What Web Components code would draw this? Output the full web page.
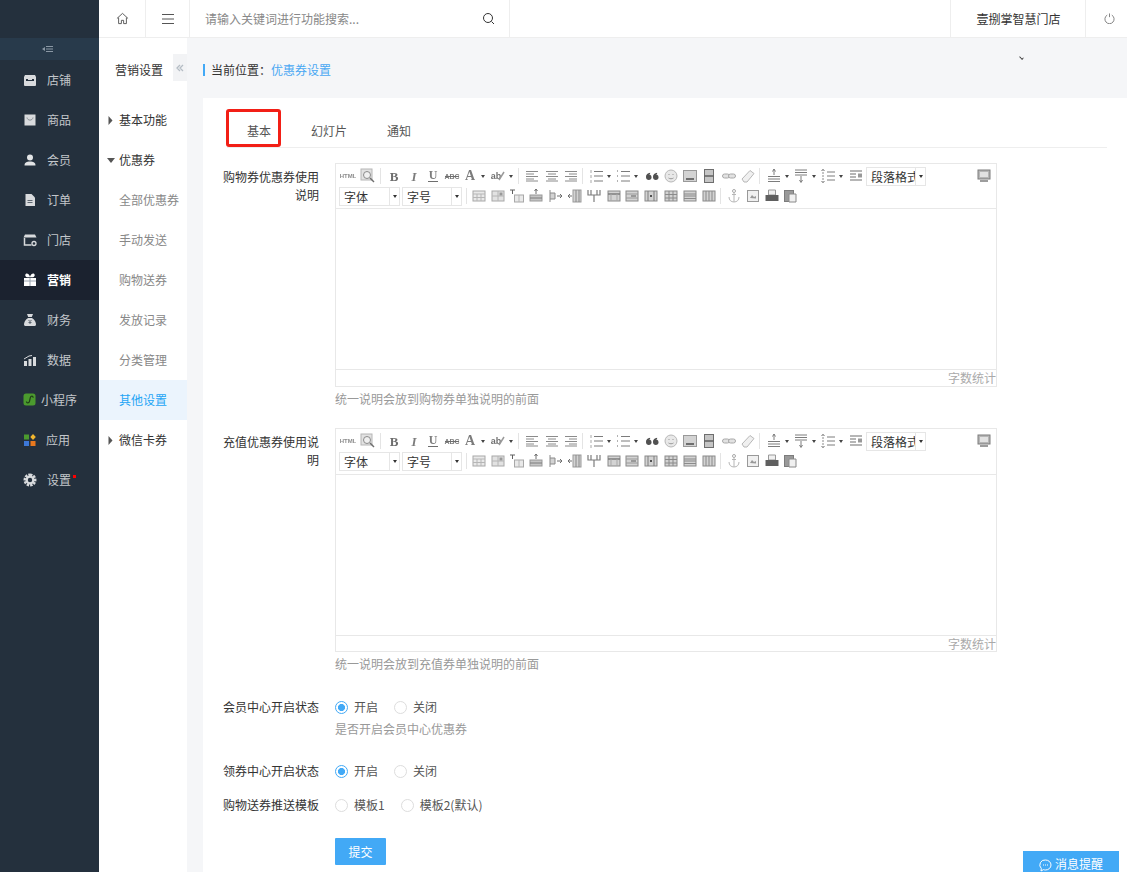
<!DOCTYPE html>
<html lang="zh">
<head>
<meta charset="utf-8">
<title>优惠券设置</title>
<style>
html, body { margin:0; height:872px; overflow:hidden; background:#f5f6f8; }
body { font:12px/18px "Noto Sans CJK SC", "Liberation Sans", sans-serif; color:#333; }
</style>
</head>
<body>
<shop-app></shop-app>
<script>
const ICONS = {
	store: '<path fill="#d8dadd" d="M2 2h10l1 2v8a1 1 0 0 1-1 1H2a1 1 0 0 1-1-1V4z"/><path fill="#24303d" d="M3 6h2v1h4V6h2v2H3z"/>',
	bag: '<path fill="#d8dadd" d="M1.500 1.500h11v11h-11z"/><path fill="none" stroke="#8a9096" d="M4 4.500c.5 3.500 5.500 3.500 6 0"/>',
	user: '<circle cx="7" cy="4.500" r="3" fill="#e2e4e6"/><path fill="#e2e4e6" d="M1.500 12.500c0-3 2-4 5.500-4s5.500 1 5.500 4z"/>',
	doc: '<path fill="#d8dadd" d="M2.500 1h6l3.500 3.500V13h-9.500z"/><path stroke="#5d6670" d="M4.500 7.500h5M4.500 9.500h5"/>',
	shop: '<path fill="#d8dadd" d="M2 1.500h10l1.500 3H.5z"/><path fill="none" stroke="#d8dadd" stroke-width="1.500" d="M1.500 5v7h7"/><circle cx="11" cy="10.500" r="2" fill="none" stroke="#d8dadd" stroke-width="1.300"/>',
	gift: '<path fill="#fff" d="M1 5h12v8H1z"/><path fill="#fff" d="M3 .8c1.500-.7 3 .6 4 3 1-2.400 2.500-3.700 4-3 1.500 1 .5 3-1 3.500H4C2.500 3.800 1.500 1.800 3 .8z"/><path stroke="#9aa4b0" d="M7 5v8M1 8h12"/>',
	money: '<path fill="#d8dadd" d="M4 1h6L8.800 4h-3.600zM5 5h4c3 2 4 4.500 4 6.500 0 1-1 1.500-2 1.500H3c-1 0-2-.5-2-1.500C1 9.500 2 7 5 5z"/><path fill="none" stroke="#5d6670" d="M5.500 7 7 8.500 8.500 7M7 8.500V11M5.500 9.500h3"/>',
	chart: '<path fill="#d8dadd" d="M1 8h3v5H1zM5.500 6h3v7h-3zM10 4h3v9h-3z"/><path fill="none" stroke="#d8dadd" d="M1 6l5-3 3-.5"/>',
	mini: '<rect x=".5" y=".5" width="12" height="12" rx="2.500" fill="#4b9a2e"/><path fill="none" stroke="#1f3d18" stroke-width="1.200" d="M3.500 8.500c0 2 2.500 1.800 3-.2l.8-3.600c.5-2 3-2 2.800 0"/>',
	apps: '<rect x="1" y="1.500" width="5" height="5" fill="#4b9a2e"/><path fill="#f3b62e" d="M10 1l2.800 3L10 7 7.300 4z"/><rect x="1" y="8" width="5" height="5" fill="#3d78d8"/><rect x="7.500" y="8" width="5" height="5" fill="#e8781e"/>',
	gear: '<path fill="none" stroke="#d8dadd" stroke-width="2.600" stroke-dasharray="2.400 1" d="M7 1.800a5.200 5.200 0 1 1-.01 0z"/><circle cx="7" cy="7" r="3.400" fill="none" stroke="#d8dadd" stroke-width="2.400"/>'
};

customElements.define('side-item', class extends HTMLElement {
	connectedCallback() {
		const gap = this.getAttribute('gap') || 10;
		this.attachShadow({mode: 'open'}).innerHTML = `
		<style>
		:host { display:flex; align-items:center; height:40px; padding-left:23px; color:#c3c7cb; }
		:host([active]) { background:#1b222f; color:#fff; font-weight:700; }
		svg { width:14px; height:14px; flex:none; margin-right:${gap}px; }
		.dot { width:3px; height:3px; background:#f00; margin:-8px 0 0 2px; }
		</style>
		<svg viewBox="0 0 14 14">${ICONS[this.getAttribute('icon')]}</svg><slot></slot>${this.hasAttribute('dot') ? '<i class="dot"></i>' : ''}`;
	}
});

customElements.define('side-bar', class extends HTMLElement {
	connectedCallback() {
		this.attachShadow({mode: 'open'}).innerHTML = `
		<style>
		:host { display:block; flex:none; width:99px; background:#24303d; }
		.top { height:38px; }
		.fold { height:22px; background:#283a4b; display:flex; align-items:center; justify-content:center; }
		svg { width:12px; height:8px; margin-left:-3px; }
		</style>
		<div class="top"></div>
		<div class="fold"><svg viewBox="0 0 12 8"><path fill="#8b98a5" d="M0 4l3-2v4z"/><path stroke="#8b98a5" d="M4 1.500h7M4 4h7M4 6.500h7"/></svg></div>
		<slot></slot>`;
	}
});

customElements.define('top-bar', class extends HTMLElement {
	connectedCallback() {
		this.attachShadow({mode: 'open'}).innerHTML = `
		<style>
		:host { display:flex; height:37px; background:#fff; border-bottom:1px solid #eee; flex:none; }
		.cell { display:flex; align-items:center; justify-content:center; border-right:1px solid #eee; box-sizing:border-box; flex:none; }
		.search { width:320px; justify-content:space-between; padding:0 14px 0 15px; color:#888; }
		.store { margin-left:auto; width:136px; border-left:1px solid #eee; color:#333; padding-left:1px; }
		svg { display:block; fill:none; stroke:#555; }
		</style>
		<div class="cell" style="width:47px"><svg width="13" height="13" viewBox="0 0 14 14"><path d="M1 7l6-5.500L13 7M2.800 6v6.500h3V9h2.400v3.500h3V6"/></svg></div>
		<div class="cell" style="width:44px"><svg width="14" height="14" viewBox="0 0 14 14"><path d="M1 2.500h12M1 7h12M1 11.500h12"/></svg></div>
		<div class="cell search"><span>请输入关键词进行功能搜索...</span><svg width="13" height="13" viewBox="0 0 13 13" style="stroke:#333"><circle cx="6" cy="6" r="4.500"/><path d="M9.500 9.500 12 12"/></svg></div>
		<div class="cell store">壹捌掌智慧门店</div>
		<div class="cell" style="width:41px;border-right:0;padding-left:5px"><svg width="11" height="11" viewBox="0 0 12 12" style="stroke:#7a7a7a"><path d="M3.500 2.300a5 5 0 1 0 5 0"/><path d="M6 .5v4"/></svg></div>`;
	}
});

customElements.define('sub-item', class extends HTMLElement {
	connectedCallback() {
		const arrow = this.getAttribute('arrow');
		const tri = arrow === 'right' ? '<path d="M1.500 0l4 4.500-4 4.500z"/>' : '<path d="M0 2h8L4 7z"/>';
		this.attachShadow({mode: 'open'}).innerHTML = `
		<style>
		:host { display:flex; align-items:center; height:40px; padding-left:20px; color:#888; }
		:host([arrow]) { color:#333; padding-left:8px; }
		:host([active]) { background:#ebf4fd; color:#1ea5f5; }
		svg { width:8px; height:9px; fill:#555; margin-right:4px; }
		</style>
		${arrow ? `<svg viewBox="0 0 8 9">${tri}</svg>` : ''}<slot></slot>`;
	}
});

customElements.define('sub-nav', class extends HTMLElement {
	connectedCallback() {
		this.attachShadow({mode: 'open'}).innerHTML = `
		<style>
		:host { display:block; position:relative; flex:none; width:88px; background:#fff; box-sizing:border-box; }
		h2 { margin:0; height:60px; padding:2px 0 0 16px; font:inherit; display:flex; align-items:center; color:#333; }
		.collapse { position:absolute; left:74px; top:16px; width:14px; height:27px; background:#f2f3f5; display:flex; align-items:center; justify-content:center; }
		svg { width:8px; height:8px; fill:none; stroke:#b4bcc4; stroke-width:1.300; }
		</style>
		<h2>营销设置</h2>
		<div class="collapse"><svg viewBox="0 0 8 8"><path d="M4 1 1 4l3 3M7 1 4 4l3 3"/></svg></div>
		<slot></slot>`;
	}
});

const UE = {
	html: '<text x="8" y="10" font-size="6" font-family="Liberation Sans" font-weight="700" text-anchor="middle" fill="#777" stroke="none">HTML</text>',
	zoom: '<rect x="1" y="1" width="11" height="11" fill="#ddd" stroke="#aaa"/><circle cx="7" cy="7" r="3.500" fill="#eee" stroke="#777"/><path d="M10 10l4 4" stroke="#555" stroke-width="1.500"/>',
	b: '<text x="8" y="12.500" font-size="13" font-family="Liberation Serif" font-weight="700" text-anchor="middle" fill="#555" stroke="none">B</text>',
	i: '<text x="8" y="12.500" font-size="13" font-family="Liberation Serif" font-style="italic" font-weight="700" text-anchor="middle" fill="#666" stroke="none">I</text>',
	u: '<text x="8" y="11" font-size="12" font-family="Liberation Serif" font-weight="700" text-anchor="middle" fill="#666" stroke="none">U</text><path d="M3 13.500h10" stroke="#555"/>',
	abc: '<text x="8" y="11" font-size="7" font-family="Liberation Sans" font-weight="700" text-anchor="middle" fill="#666" stroke="none">ABC</text><path d="M1 8.500h14" stroke="#555"/>',
	color: '<text x="8" y="12" font-size="14" font-family="Liberation Serif" font-weight="700" text-anchor="middle" fill="#666" stroke="none">A</text>',
	bg: '<text x="6" y="11" font-size="9" font-family="Liberation Sans" font-weight="700" text-anchor="middle" fill="#555" stroke="none">ab</text><path d="M9 12 14 4" stroke="#888" stroke-width="1.500"/>',
	left: '<path d="M2 3.500h12M2 6h8M2 8.500h12M2 11h8M2 13h12" stroke="#777"/>',
	center: '<path d="M2 3.500h12M4 6h8M2 8.500h12M4 11h8M2 13h12" stroke="#777"/>',
	right: '<path d="M2 3.500h12M6 6h8M2 8.500h12M6 11h8M2 13h12" stroke="#777"/>',
	ol: '<path d="M3 2v3M3 7v3M3 12v3" stroke="#999"/><path d="M6 3.500h9M6 8h9M6 13h9" stroke="#666"/>',
	ul: '<path d="M2 3h2M2 8h2M2 13h2" stroke="#888" stroke-width="1.500" stroke-dasharray="1 1"/><path d="M6 3.500h9M6 8h9M6 13h9" stroke="#666"/>',
	quote: '<g fill="#333" stroke="none"><circle cx="4.800" cy="9.200" r="2.700"/><path d="M2.100 9c0-2.600 1.500-4 4-4.300v1.600c-1.200.2-1.800 1-1.800 2.500z"/><circle cx="11.800" cy="9.200" r="2.700"/><path d="M9.100 9c0-2.600 1.500-4 4-4.300v1.600c-1.200.2-1.800 1-1.800 2.500z"/></g>',
	smile: '<circle cx="8" cy="8" r="6" fill="#e4e4e4" stroke="#aaa"/><path d="M5.500 6.500h1M9.500 6.500h1M5.500 10c1.500 1 3.500 1 5 0" stroke="#888"/>',
	image: '<rect x="1.500" y="2.500" width="13" height="11" fill="#ccc" stroke="#888"/><path d="M4 10h8v2H4z" fill="#555" stroke="none"/>',
	film: '<rect x="3.500" y="1.500" width="9" height="13" fill="#bbb" stroke="#555"/><path d="M3.500 8h9" stroke="#444" stroke-width="1.500"/>',
	link: '<rect x="1.500" y="6" width="7" height="4" rx="2" fill="#ddd" stroke="#999"/><rect x="7.500" y="6" width="7" height="4" rx="2" fill="#ddd" stroke="#999"/>',
	eraser: '<path d="M2 11 10 2.500l4 3L7 14H4z" fill="#eee" stroke="#aaa"/>',
	rowspace: '<path d="M8 1v6M6.500 3.500 8 1l1.500 2.500" stroke="#666"/><path d="M2 8.500h12M2 11h12M2 13.500h12" stroke="#666"/>',
	rowspace2: '<path d="M2 2h12M2 4.500h12M2 7h12" stroke="#666"/><path d="M8 8v6M6.500 12 8 14.500 9.500 12" stroke="#666"/>',
	line: '<path d="M3 1v14M1.500 3 3 1l1.500 2M1.500 13 3 15l1.500-2" stroke="#777" stroke-dasharray="2 1"/><path d="M7 4h8M7 8h8M7 12h8" stroke="#666"/>',
	indent: '<path d="M2 3h12M2 6h6M2 9h6M2 12h12" stroke="#555" stroke-width="1.200"/><path d="M10 5.500h4v4h-4z" fill="#888" stroke="none"/>',
	preview: '<rect x="2" y="2" width="12" height="9" fill="#aaa" stroke="#666"/><path d="M4 4h8v5H4z" fill="#ddd" stroke="none"/><path d="M4 13h8" stroke="#666" stroke-width="1.500"/>',
	table: '<rect x="2" y="3" width="12" height="10" fill="#e6e6e6" stroke="#999"/><path d="M2 6h12M2 9.500h12M6 6v7M10 6v7" stroke="#aaa"/>',
	tdel: '<rect x="2" y="3" width="12" height="10" fill="#ddd" stroke="#999"/><path d="M8 3v10M2 8h12" stroke="#aaa"/><path d="M9.500 4.500h3v3h-3z" fill="#888" stroke="none"/>',
	title: '<path d="M1 2h5M3.500 2v4" stroke="#444"/><rect x="5.500" y="7" width="9" height="7" fill="#e6e6e6" stroke="#999"/><path d="M10 7v7" stroke="#aaa"/>',
	rowup: '<path d="M8 1v5M6.500 3 8 1l1.500 2" stroke="#555"/><rect x="2" y="7" width="12" height="6" fill="#bbb" stroke="#888"/><path d="M2 10h12" stroke="#666"/>',
	colr: '<path d="M2 2v12M2 5h5v6H2" stroke="#777" fill="#ccc"/><path d="M9 8h5M12 6l2 2-2 2" stroke="#555"/>',
	coll: '<path d="M1 8h4M3 6 1 8l2 2" stroke="#555"/><rect x="6" y="2" width="8" height="12" fill="#ccc" stroke="#888"/><path d="M9 2v12M12 2v12" stroke="#777"/>',
	split: '<path d="M2 2v5h12V2M8 7v7M5 2v5M11 2v5" stroke="#666" stroke-width="1.200"/>',
	cell: '<rect x="2" y="3" width="12" height="10" fill="#ccc" stroke="#777"/><path d="M2 6h12" stroke="#666" stroke-width="1.500"/><path d="M5 6v7M11 6v7" stroke="#999"/>',
	cell2: '<rect x="2" y="3" width="12" height="10" fill="#ccc" stroke="#777"/><path d="M2 6h12M2 10h12" stroke="#888"/><path d="M7 8h5" stroke="#444"/>',
	cell3: '<rect x="2" y="3" width="12" height="10" fill="#ccc" stroke="#777"/><path d="M5 3v10M11 3v10" stroke="#666"/><path d="M7 8h2" stroke="#333" stroke-width="2"/>',
	grid: '<rect x="2" y="3" width="12" height="10" fill="#ccc" stroke="#777"/><path d="M2 6.500h12M2 10h12M6 3v10M10 3v10" stroke="#777"/>',
	rows: '<rect x="2" y="3" width="12" height="10" fill="#ccc" stroke="#777"/><path d="M2 6h12M2 8h12M2 10.500h12" stroke="#777"/>',
	cols: '<rect x="2" y="3" width="12" height="10" fill="#ccc" stroke="#777"/><path d="M5 3v10M8 3v10M11 3v10" stroke="#777"/>',
	anchor: '<circle cx="8" cy="3" r="1.500" fill="none" stroke="#999"/><path d="M8 4.500V14M3 9c0 3 2 5 5 5s5-2 5-5M6 6.500h4" stroke="#aaa" fill="none"/>',
	frame: '<rect x="2.500" y="2.500" width="11" height="11" fill="#eee" stroke="#888"/><path d="M5 10l2-3 2 2 2-1v2.500z" fill="#888" stroke="none"/>',
	print: '<path d="M4.500 2h7v5h-7z" fill="#eee" stroke="#888"/><path d="M1.500 7h13v6h-13z" fill="#444" stroke="none"/>',
	paste: '<rect x="2.500" y="2.500" width="9" height="11" fill="#888" stroke="#666"/><path d="M7 6h7v8H7z" fill="#eee" stroke="#777"/>'
};

// a number in the list is a separator, its value the free space around the line
const ROW1 = [
	['html', 20], ['zoom', 20], 5,
	['b', 20], ['i', 19], ['u', 20], ['abc', 18], ['color', 28, 1], ['bg', 27, 1], 5,
	['left', 20], ['center', 19], ['right', 19], 6,
	['ol', 27, 1], ['ul', 28, 1], ['quote', 19], ['smile', 19], ['image', 19], ['film', 20], ['link', 19], ['eraser', 19], 7,
	['rowspace', 27, 1], ['rowspace2', 27, 1], ['line', 27, 1], ['indent', 20]
];
const ROW2 = [
	['table', 19], ['tdel', 20], ['title', 18], ['rowup', 20], ['colr', 19], ['coll', 19], ['split', 20], ['cell', 19],
	['cell2', 18], ['cell3', 20], ['grid', 19], ['rows', 19], ['cols', 19], 5,
	['anchor', 19], ['frame', 19], ['print', 19], ['paste', 18]
];

function ueButtons(list) {
	return list.map(item => {
		if (typeof item === 'number') {
			return `<i class="sep" style="margin:0 ${item - 2}px 0 2px"></i>`;
		}
		const [name, width, arrow] = item;
		return `<span class="btn${arrow ? ' drop' : ''}" style="width:${width}px"><svg viewBox="0 0 16 16" fill="none">${UE[name]}</svg>${arrow ? '<b></b>' : ''}</span>`;
	}).join('');
}

customElements.define('ue-select', class extends HTMLElement {
	connectedCallback() {
		this.attachShadow({mode: 'open'}).innerHTML = `
		<style>
		:host { display:flex; box-sizing:border-box; height:19px; border:1px solid #e6e6e6; background:#fff; flex:none; color:#333; line-height:17px; }
		.label { flex:1; min-width:0; overflow:hidden; white-space:nowrap; padding-left:4px; border-right:1px solid #e6e6e6; }
		.arrow { flex:none; width:9px; display:flex; align-items:center; justify-content:center; }
		.arrow::after { content:''; border:2.500px solid transparent; border-top:3px solid #333; border-bottom:0; }
		</style>
		<div class="label"><slot></slot></div><div class="arrow"></div>`;
	}
});

customElements.define('rich-editor', class extends HTMLElement {
	connectedCallback() {
		const tall = this.hasAttribute('tall');
		this.attachShadow({mode: 'open'}).innerHTML = `
		<style>
		:host { display:block; width:662px; height:224px; box-sizing:border-box; border:1px solid #e8e8e8; background:#fff; }
		.box { display:flex; flex-direction:column; height:100%; }
		.toolbar { flex:none; height:${tall ? 43 : 42}px; border-bottom:1px solid #e8e8e8; padding:2px 3px 0 3px; }
		.row { display:flex; align-items:center; height:20px; }
		.row1 { margin-left:-1px; }
		.btn { display:flex; align-items:center; justify-content:center; flex:none; height:20px; box-sizing:border-box; }
		.btn.drop { justify-content:flex-start; padding-left:1px; }
		.btn svg { width:16px; height:16px; flex:none; opacity:.85; filter:blur(.35px); }
		.btn b { margin-left:3px; border:2.500px solid transparent; border-top:3px solid #444; border-bottom:0; }
		.sep { flex:none; width:1px; height:16px; background:#e4e4e4; }
		.body { flex:1; }
		.count { flex:none; height:${tall ? 15 : 16}px; line-height:15px; border-top:1px solid #e8e8e8; text-align:right; color:#aaa; }
		</style>
		<div class="box">
			<div class="toolbar">
				<div class="row row1">${ueButtons(ROW1)}
					<ue-select style="width:60px">段落格式</ue-select>
					<span class="btn" style="width:20px;margin-left:auto;margin-right:-1px"><svg viewBox="0 0 16 16" fill="none">${UE.preview}</svg></span>
				</div>
				<div class="row">
					<ue-select style="width:61px;margin-right:2px">字体</ue-select>
					<ue-select style="width:60px">字号</ue-select>
					<i class="sep" style="margin:0 2px 0 4px"></i>${ueButtons(ROW2)}
				</div>
			</div>
			<div class="body"></div>
			<div class="count">字数统计</div>
		</div>`;
	}
});

customElements.define('form-row', class extends HTMLElement {
	connectedCallback() {
		this.attachShadow({mode: 'open'}).innerHTML = `
		<style>
		:host { display:flex; gap:16px; }
		.label { width:96px; flex:none; text-align:right; color:#333; line-height:18px; }
		.control { flex:1; min-width:0; }
		</style>
		<div class="label" style="padding-top:${this.getAttribute('pad') || 0}px"><slot name="label"></slot></div>
		<div class="control"><slot></slot></div>`;
	}
});

customElements.define('radio-opt', class extends HTMLElement {
	connectedCallback() {
		this.attachShadow({mode: 'open'}).innerHTML = `
		<style>
		:host { display:inline-flex; align-items:center; gap:6px; color:#555; height:18px; margin-right:16px; vertical-align:top; }
		i { width:13px; height:13px; box-sizing:border-box; border:1px solid #ddd; border-radius:50%; background:#fff; flex:none; }
		:host([checked]) i { border:1.500px solid #42a9f6; background:radial-gradient(circle, #42a9f6 0 3.300px, #fff 3.800px); }
		</style>
		<i></i><slot></slot>`;
	}
});

customElements.define('help-text', class extends HTMLElement {
	connectedCallback() {
		this.attachShadow({mode: 'open'}).innerHTML = `
		<style>:host { display:block; color:#999; line-height:18px; margin-top:3px; }</style><slot></slot>`;
	}
});

customElements.define('tab-bar', class extends HTMLElement {
	connectedCallback() {
		this.attachShadow({mode: 'open'}).innerHTML = `
		<style>
		:host { display:flex; position:relative; height:35px; margin:0 0 15px 4px; border-bottom:1px solid #eee; }
		span { padding:0 20px; line-height:37px; color:#555; }
		.mark { position:absolute; left:-1px; top:-3px; width:55px; height:38px; box-sizing:border-box; border:3px solid #f21f16; border-radius:3px; }
		</style>
		<span>基本</span><span>幻灯片</span><span>通知</span><div class="mark"></div>`;
	}
});

customElements.define('coupon-page', class extends HTMLElement {
	connectedCallback() {
		this.attachShadow({mode: 'open'}).innerHTML = `
		<style>
		:host { display:block; position:relative; flex:1; min-width:0; padding-left:16px; background:#f5f6f8; }
		.crumb { height:60px; display:flex; align-items:center; box-sizing:border-box; padding-top:4px; }
		.crumb i { width:2px; height:12px; background:#42a9f6; margin-right:6px; }
		.crumb a { color:#4aa8f3; }
		.caret { position:absolute; left:832px; top:18px; width:4px; height:2px; border:solid #333; border-width:0 1.500px 1.500px 0; transform:rotate(45deg) scale(.8); }
		.panel { background:#fff; padding:14px 20px 0; height:761px; }
		</style>
		<div class="crumb"><i></i>当前位置：<a>优惠券设置</a></div>
		<div class="caret"></div>
		<div class="panel"><slot></slot></div>`;
	}
});

customElements.define('submit-btn', class extends HTMLElement {
	connectedCallback() {
		this.attachShadow({mode: 'open'}).innerHTML = `
		<style>
		:host { display:block; width:51px; height:27px; line-height:27px; background:#42a9f6; color:#fff; text-align:center; border-radius:1px; }
		</style><slot></slot>`;
	}
});

customElements.define('msg-float', class extends HTMLElement {
	connectedCallback() {
		this.attachShadow({mode: 'open'}).innerHTML = `
		<style>
		:host { position:fixed; right:8px; bottom:0; width:96px; height:21px; box-sizing:border-box; padding:4px 0 0 16px; overflow:hidden; background:#42a9f6; color:#fff; display:flex; align-items:flex-start; gap:3px; }
		svg { width:13px; height:13px; margin-top:4px; fill:none; stroke:#fff; flex:none; }
		</style>
		<svg viewBox="0 0 13 13"><path d="M6.500 1a5.500 5 0 0 1 0 10 5.500 5.500 0 0 1-2-.4L2 12l.3-2.500A5 5 0 0 1 6.500 1z"/><path d="M4 6h1M6 6h1M8 6h1"/></svg><slot></slot>`;
	}
});

customElements.define('shop-app', class extends HTMLElement {
	connectedCallback() {
		this.attachShadow({mode: 'open'}).innerHTML = `
		<style>
		:host { display:flex; height:872px; }
		.main { flex:1; min-width:0; display:flex; flex-direction:column; }
		.below { flex:1; display:flex; min-height:0; }
		.radios { height:18px; }
		</style>
		<side-bar>
			<side-item icon="store">店铺</side-item>
			<side-item icon="bag">商品</side-item>
			<side-item icon="user">会员</side-item>
			<side-item icon="doc">订单</side-item>
			<side-item icon="shop">门店</side-item>
			<side-item icon="gift" active>营销</side-item>
			<side-item icon="money">财务</side-item>
			<side-item icon="chart">数据</side-item>
			<side-item icon="mini" gap="4">小程序</side-item>
			<side-item icon="apps" gap="9">应用</side-item>
			<side-item icon="gear" dot>设置</side-item>
		</side-bar>
		<div class="main">
			<top-bar></top-bar>
			<div class="below">
				<sub-nav>
					<sub-item arrow="right">基本功能</sub-item>
					<sub-item arrow="down">优惠券</sub-item>
					<sub-item>全部优惠券</sub-item>
					<sub-item>手动发送</sub-item>
					<sub-item>购物送券</sub-item>
					<sub-item>发放记录</sub-item>
					<sub-item>分类管理</sub-item>
					<sub-item active>其他设置</sub-item>
					<sub-item arrow="right">微信卡券</sub-item>
				</sub-nav>
				<coupon-page>
					<tab-bar></tab-bar>
					<form-row pad="5">
						<span slot="label">购物券优惠券使用说明</span>
						<rich-editor></rich-editor>
						<help-text>统一说明会放到购物券单独说明的前面</help-text>
					</form-row>
					<div style="height:20px"></div>
					<form-row pad="5">
						<span slot="label">充值优惠券使用说明</span>
						<rich-editor tall></rich-editor>
						<help-text>统一说明会放到充值券单独说明的前面</help-text>
					</form-row>
					<div style="height:25px"></div>
					<form-row>
						<span slot="label">会员中心开启状态</span>
						<div class="radios"><radio-opt checked>开启</radio-opt><radio-opt>关闭</radio-opt></div>
						<help-text style="margin-top:4px">是否开启会员中心优惠券</help-text>
					</form-row>
					<div style="height:24px"></div>
					<form-row>
						<span slot="label">领券中心开启状态</span>
						<div class="radios"><radio-opt checked>开启</radio-opt><radio-opt>关闭</radio-opt></div>
					</form-row>
					<div style="height:16px"></div>
					<form-row>
						<span slot="label">购物送券推送模板</span>
						<div class="radios"><radio-opt>模板1</radio-opt><radio-opt>模板2(默认)</radio-opt></div>
					</form-row>
					<div style="height:24px"></div>
					<form-row>
						<span slot="label"></span>
						<submit-btn>提交</submit-btn>
					</form-row>
				</coupon-page>
			</div>
		</div>
		<msg-float>消息提醒</msg-float>`;
	}
});
</script>
</body>
</html>
